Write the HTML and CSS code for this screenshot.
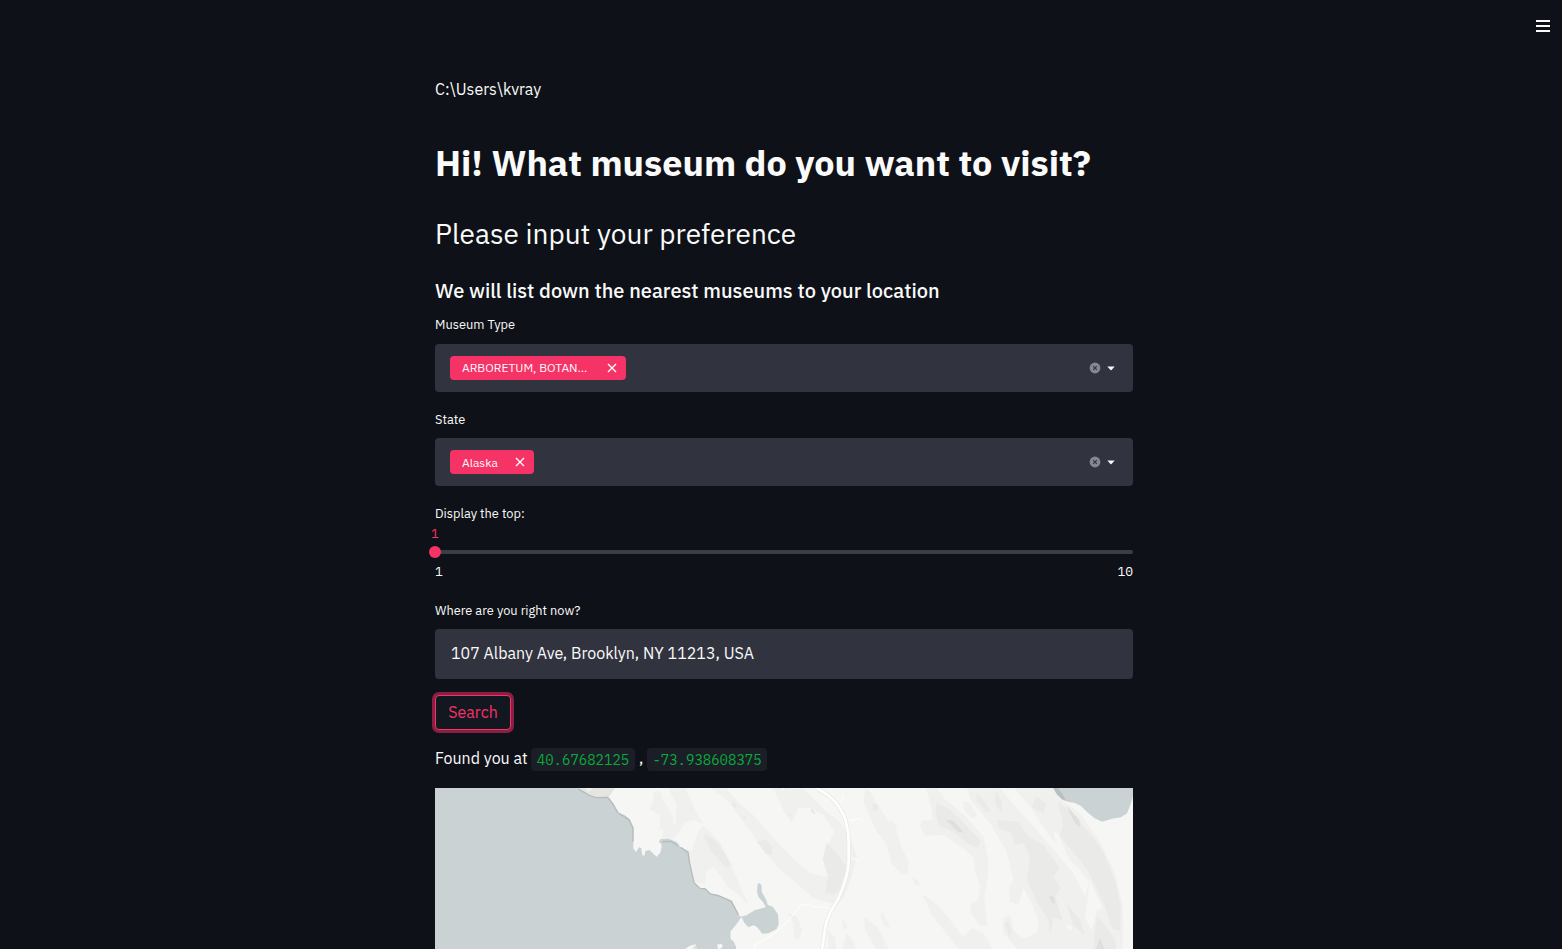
FILE: index.html
```html
<!DOCTYPE html>
<html lang="en">
<head>
<meta charset="utf-8">
<title>Museum finder</title>
<link rel="stylesheet" href="styles.css">
</head>
<body>
<button class="menu" aria-label="Menu"><span></span><span></span><span></span></button>
<main class="column">
  <p class="path"><span>C:\Users\kvray</span></p>
  <h1 class="title"><span>Hi! What museum do you want to visit?</span></h1>
  <h2 class="subtitle"><span>Please input your preference</span></h2>
  <h3 class="lead"><span>We will list down the nearest museums to your location</span></h3>

  <div class="label label-type">Museum Type</div>
  <div class="select">
    <div class="tag tag-wide"><span class="tag-text">ARBORETUM, BOTAN...</span><svg class="x" viewBox="0 0 10 10"><path d="M1 1l8 8M9 1l-8 8"/></svg></div>
    <div class="controls">
      <svg class="clear" viewBox="-.5 -.5 12 12"><circle cx="5.5" cy="5.5" r="5.4"/><path d="M3.7 3.7l3.6 3.6M7.3 3.7L3.700 7.300"/></svg>
      <svg class="caret" viewBox="0 0 8 5"><path d="M.3 .5h7.400L4.500 4.100q-.5.5-1 0z"/></svg>
    </div>
  </div>

  <div class="label label-state">State</div>
  <div class="select">
    <div class="tag"><span class="tag-short">Alaska</span><svg class="x" viewBox="0 0 10 10"><path d="M1 1l8 8M9 1l-8 8"/></svg></div>
    <div class="controls">
      <svg class="clear" viewBox="-.5 -.5 12 12"><circle cx="5.5" cy="5.5" r="5.4"/><path d="M3.7 3.7l3.6 3.6M7.3 3.7L3.700 7.300"/></svg>
      <svg class="caret" viewBox="0 0 8 5"><path d="M.3 .5h7.400L4.500 4.100q-.5.5-1 0z"/></svg>
    </div>
  </div>

  <div class="label label-top">Display the top:</div>
  <div class="value">1</div>
  <div class="track"><div class="thumb"></div></div>
  <div class="ticks"><span>1</span><span>10</span></div>

  <div class="label label-where">Where are you right now?</div>
  <div class="input"><span>107 Albany Ave, Brooklyn, NY 11213, USA</span></div>
  <button class="search">Search</button>
  <p class="found"><span class="found-text">Found you at</span><code class="lat">40.67682125</code><span class="comma">,</span><code class="lon">-73.938608375</code></p>

  <svg class="map" viewBox="30 24 2094 483" preserveAspectRatio="none">
    <rect x="30" y="24" width="2094" height="483" fill="#f6f6f4"/>
    <!-- relief shading -->
    <g fill="#f0f0ee">
      <path d="M685 35l20-3 8 30 15 38-20 8-35-20 12-25zM715 118l22-5 13 25v40l-40-2 5-25-8-20z"/>
      <g transform="translate(705)">
        <path d="M0 50l20 25 20 40-20 33H0zM25 24h52l25 60 28 48-30-12-25 10-30 40-40 5 42-42 2-60z"/>
        <path d="M80 205l15 10 20-60 15-18 50 50 34 70 52 118-35-35-29-20-15-27-27-33-22 17-3 35-35-5-15-30z"/>
        <path d="M150 24h48l30 36 52 45 68 78 50 50 50 45 52 12 28-20-18-45-5-35 20-35-35-50-42-22-32 0-20 45-22-30-30-62-46-42h65l30 35 35-5 30 30 40 40 40 30 35 55 18 50-20 75-20 50-20 20-72-20-50-44-58-50-42-54-50-68-50-68-25-24z"/>
        <path d="M615 24l15 10 24 40 34 54 25 35 12 45 20 70-17 5-32-30-18-64-28-34-25-55-14-30zM385 400l25 10 16 40-10 30-12-5-4-45zM545 420l10 2 8 22-14 2zM612 412l40 30 35 65h-40l-32-56zM665 393l25 50-18-7-9-25zM505 507l-2-55 22 18 5 37zM560 458l20 25 8 24h-40z"/>
      </g>
      <g transform="translate(1395)">
        <path d="M108 24H140L165 58L215 98L250 135L280 170L294 235V290L283 345L292 440L268 436L240 395L245 370L264 358L270 320L256 275L252 235L220 205L160 165L105 168L90 138L97 122L128 118L125 85z"/>
        <path d="M0 115l18 20 8 50 30 60-3 40-33-30-20-52zM65 288l20 15 7 17-17-6zM96 342l50 35 45 58 28 35 28-25 32 15 30 47H205l-45-58-35-45z"/>
        <path d="M218 62L240 68L260 105L248 118L222 90zM230 24H330L385 89L440 150L500 220L550 280L585 350L598 300L633 365L670 430L700 430L694 507H380L338 455L340 415L362 405L370 450L400 475L440 460L445 420L425 370L400 325L385 375L360 365L358 320L370 300L350 215L300 130L245 65z"/>
        <path d="M372 24H490L522 64L572 102L632 188L674 278L696 368L700 430L698 507H650L630 400L600 310L570 270L525 225L480 170L420 80z"/>
      </g>
    </g>
    <g fill="#eaeae8">
      <g transform="translate(705)">
        <path d="M130 162l28 13 22 22 35 58-15 8-48-52zM290 184l28-6 18 22v25l-18-3zM218 65l14 10-5 9-10-5zM500 188l24 25 35 45-4 50-34 38-25-8 8-50-16-50zM248 104l10 8-4 8zM380 98l14 6-2 5z"/>
        <path d="M638 70l18 5-8 22-10-10zM455 84l12 14-5 5-10-10z"/>
      </g>
      <g transform="translate(1395)">
        <path d="M140 70l34 15 36 32 62 65-8 20-30-10-44-38-42-15-12-38zM260 40l20 20 20 30-10 8-30-35zM316 30l20 38-2 28-18-20zM320 120L385 125L415 170L460 195L510 265L490 290L512 325L495 350L518 420L490 415L480 465L475 420L440 365L410 300L420 230L400 190L375 195L365 160L325 145z"/>
        <path d="M505 65l30 25 34 35 38 45 34 48 35 85 17 80-2 70-24-5-25-75-45-95-38-50-50-60 10-30zM528 370l40 45 17 50-35-30zM345 430l10-8 12 34-10 14zM620 410l20 18 35 50 5 29h-70zM440 50l30 20-10 30-36-20z"/>
      </g>
    </g>
    <g fill="#dfdfdd" transform="translate(1395)">
      <path d="M168 120l22 2 32 36-18-3zM528 75l40 45 2 20-14-8zM477 348l14 2 4 22-10-5zM630 474l14 33h-26z"/>
    </g>
    <g fill="#f6f6f4" transform="translate(1395)"><path d="M490 150l14 10 20 45 16 45-28-25-15-40zM598 300l41 85-18 5-15 60-22-35 9-55zM530 430l18 10-5 15-12-12z"/></g>
    <!-- bay, lagoon and lake -->
    <path fill="#e4e4e1" d="M458 24H570L552 50L515 55z"/>
    <path fill="#f0f0ee" d="M480 24h25l-15 12z"/>
    <path class="water" d="M30 24H453L470 31L495 46L510 53L545 49L553 55L566 72L578 98L600 106L615 118L625 145V205L633 216L642 202L649 205L650 215L653 227L659 226L661 213L673 210L695 230L706 218L710 200L708 190L702 188L705 178L730 176L755 186L767 202L790 214L795 250L807 308L826 328L838 323L853 340L880 345L920 362L940 403L947 410L965 406L990 390L1022 382L1018 372L1000 350L996 335L998 312L1004 309L1010 318V335L1024 360L1028 374L1043 380L1059 403L1061 432L1055 447L1030 460L1012 461L995 440L985 436L970 442L958 428L950 412L944 418L940 425L916 455L917 478L925 483L933 500V507H30z"/>
    <path class="shore" d="M458 26L493 46L512 53H550M550 54L566 76L580 100M582 100L612 120L624 143V185M712 185L738 184L760 198M767 202L789 217L794 250L807 308L826 326L840 326L856 342L880 347L919 364L940 404"/>
    <path d="M780 507l15-10 16-4 5 14zM876 494l13-3 5 8-9 8h-6z" fill="#f6f6f4"/>
    <path d="M802 507l8-11 8 11z" fill="#dededb"/>
    <path class="water" d="M1885 24L1895 42L1911 58L1928 65L1950 69L1967 77L1987 97L2007 113L2031 125L2061 116L2088 112L2106 100L2114 80L2124 50V24z"/>
    <path d="M1885 24l10 18 16 16 12 4-12-22-12-16z" fill="#b8bfc0"/>
    <!-- roads -->
    <g transform="translate(705)" fill="none">
      <path class="track-road" d="M540 68l12-20M568 123l34-8 10 10M570 232l30 12M368 32l3-8M282 507l2-12 56-32 42-37 40-50 20-3 22 8 30 1 22 8"/>
      <path class="road-edge" d="M465 22q48 24 70 56 16 24 22 44 9 30 9 62v62q-2 38-22 88-8 24-26 50-18 32-22 58l-10 67"/>
      <path class="road" d="M465 22q48 24 70 56 16 24 22 44 9 30 9 62v62q-2 38-22 88-8 24-26 50-18 32-22 58l-10 67"/>
    </g>
  </svg>
</main>
</body>
</html>
```

FILE: styles.css
```css
* { box-sizing: border-box; margin: 0; padding: 0; }
html, body { height: 949px; overflow: hidden; }
body {
  background: #0e1117;
  color: #fafafa;
  font-family: "IBM Plex Sans", Roboto, "Noto Sans", sans-serif;
  font-size: 16px;
  white-space: nowrap;
}
.menu {
  position: absolute; top: 20px; right: 12px;
  width: 14px; height: 12px;
  display: flex; flex-direction: column; justify-content: space-between;
  background: none; border: 0;
}
.menu span { height: 2px; background: #fafafa; }
.column { width: 698px; margin-left: 435px; padding-top: 77px; display: flex; flex-direction: column; }
.path { height: 26px; line-height: 24px; }
.title { height: 54px; margin-top: 34px; font-size: 36px; line-height: 52px; font-weight: 700; }
.subtitle { height: 44px; margin-top: 22px; font-size: 28px; line-height: 42px; font-weight: 400; }
.lead { height: 32px; margin-top: 18px; font-size: 20px; line-height: 32px; font-weight: 500; letter-spacing: 0.01px; }
.label { height: 20px; line-height: 20px; font-size: 12.8px; margin-top: 18px; }
.label-type { margin-top: 8px; margin-bottom: 1px; }
.label-where { margin-top: 19px; }
.select {
  height: 48px; margin-top: 8px; padding: 0 18px 0 15px;
  display: flex; align-items: center; justify-content: space-between;
  background: #31333f; border-radius: 4px;
}
.tag {
  width: 84px; height: 24px; padding: 0 9px 0 12px;
  display: flex; align-items: center; justify-content: space-between;
  background: #f63366; border-radius: 4px; font-size: 12px;
}
.tag-wide { width: 176px; }
.tag-text { padding-bottom: 2px; }
.x { width: 10px; height: 10px; fill: none; stroke: #fafafa; stroke-width: 1.4; }
.controls { display: flex; align-items: center; gap: 6px; }
.clear { width: 12px; height: 12px; }
.clear circle { fill: #858794; }
.clear path { fill: none; stroke: #31333f; stroke-width: 1.1; }
.caret { width: 8px; height: 5px; fill: #fafafa; }
.value { height: 20px; margin-left: -4px; color: #f63366; font: 13px/20px "IBM Plex Mono", "Liberation Mono", monospace; }
.track { position: relative; height: 4px; margin-top: 6px; background: #3a3c46; border-radius: 2px; }
.thumb { position: absolute; left: -6px; top: -4px; width: 12px; height: 12px; border-radius: 50%; background: #f63366; }
.ticks { height: 20px; margin-top: 8px; display: flex; justify-content: space-between; font: 13px/20px "IBM Plex Mono", "Liberation Mono", monospace; }
.input { height: 50px; margin-top: 8px; padding-left: 16px; line-height: 48px; background: #31333f; border-radius: 4px; }
.search {
  width: 76px; height: 35px; margin-top: 16px; padding-bottom: 2px;
  background: #131720; color: #f63366; border: 1px solid #f63366; border-radius: 4px;
  box-shadow: 0 0 0 3px #882043; font: inherit;
}
.found { height: 26px; margin-top: 16px; display: flex; align-items: center; }
.found-text { width: 96px; padding-bottom: 2px; }
code {
  height: 23px; margin-top: 1px; line-height: 24px; border-radius: 4px; text-align: center;
  background: #1b1e26; color: #09ab3b; font-family: "IBM Plex Mono", "Liberation Mono", monospace; font-size: 14px;
}
.lat { width: 104px; }
.lon { width: 120px; }
.comma { width: 12px; padding: 0 0 2px 4px; }
.map { display: block; width: 698px; height: 161px; margin-top: 16px; }
.water { fill: #cad2d3; }
.shore { fill: none; stroke: #b5bcbd; stroke-width: 4; }
.track-road { stroke: #fff; stroke-width: 3; }
.road-edge { stroke: #eaeae8; stroke-width: 13; }
.road { stroke: #fff; stroke-width: 8; }
```
